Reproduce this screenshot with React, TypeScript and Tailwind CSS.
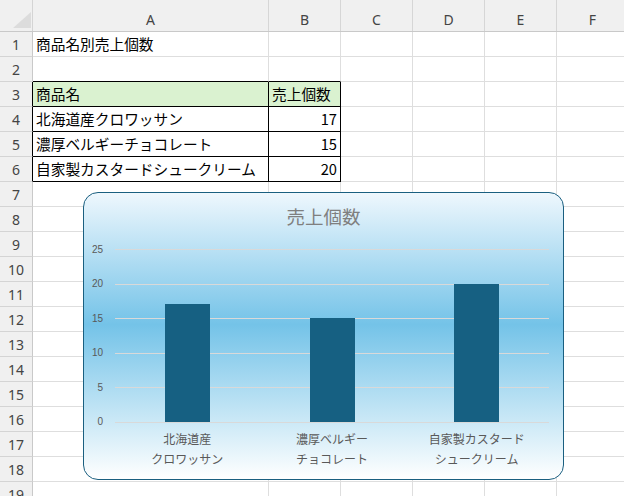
import React from 'react';

type Cell = { text?: string; right?: boolean; head?: boolean };

const COLS = [
  { label: 'A', w: 'w-[236px]' },
  { label: 'B', w: 'w-[72px]' },
  { label: 'C', w: 'w-[72px]' },
  { label: 'D', w: 'w-[72px]' },
  { label: 'E', w: 'w-[72px]' },
  { label: 'F', w: 'w-[72px]' },
];

const CELLS: Record<number, Cell[]> = {
  1: [{ text: '商品名別売上個数' }],
  3: [{ text: '商品名', head: true }, { text: '売上個数', head: true }],
  4: [{ text: '北海道産クロワッサン' }, { text: '17', right: true }],
  5: [{ text: '濃厚ベルギーチョコレート' }, { text: '15', right: true }],
  6: [{ text: '自家製カスタードシュークリーム' }, { text: '20', right: true }],
};

const SALES = [
  { top: '北海道産', bottom: 'クロワッサン', value: 17 },
  { top: '濃厚ベルギー', bottom: 'チョコレート', value: 15 },
  { top: '自家製カスタード', bottom: 'シュークリーム', value: 20 },
];

const TICKS = ['25', '20', '15', '10', '5', '0'];
const MAX = 25;

function SheetRow({ row }: { row: number }) {
  const inTable = row >= 3 && row <= 6;
  return (
    <div className="flex h-[25px]">
      <div
        className={`flex w-[33px] shrink-0 items-center justify-center border-b border-r border-b-[#d4d4d4] bg-[#f0f0f0] pt-[1px] font-['Noto_Sans',sans-serif] text-[14px] text-[#444] ${
          inTable ? 'border-r-black' : 'border-r-[#c9c9c9]'
        }`}
      >
        {row}
      </div>
      {COLS.map((col, c) => {
        const cell = CELLS[row]?.[c];
        const black = c <= 1;
        const blackRight = black && inTable;
        const blackBottom = black && row >= 2 && row <= 6;
        return (
          <div
            key={col.label}
            className={`flex ${col.w} shrink-0 items-center border-b border-r px-[3px] font-['Noto_Sans_CJK_JP',sans-serif] text-[14.7px] whitespace-nowrap text-black ${
              blackRight ? 'border-r-black' : 'border-r-[#dedede]'
            } ${blackBottom ? 'border-b-black' : 'border-b-[#dedede]'} ${
              cell?.head ? 'bg-[#daf2d0]' : 'bg-white'
            } ${cell?.right ? 'justify-end' : 'justify-start'}`}
          >
            {cell?.text}
          </div>
        );
      })}
    </div>
  );
}

function SalesChart() {
  return (
    <div className="absolute left-[83px] top-[192px] h-[288px] w-[481px] rounded-[15px] border border-[#1a5f80] bg-[linear-gradient(to_bottom,#eef7fd_0%,#74c3e8_46%,#ffffff_100%)] font-['Noto_Sans_CJK_JP',sans-serif]">
      <div className="pt-[11px] text-center text-[18.5px] leading-[24px] text-[#7f7f7f]">売上個数</div>
      <div className="mt-[21px] flex items-start">
        <div className="-mt-[5.5px] flex h-[185px] w-[19px] flex-col justify-between text-right font-['Liberation_Sans',sans-serif] text-[10px] leading-[12px] text-[#595959]">
          {TICKS.map((t) => (
            <span key={t}>{t}</span>
          ))}
        </div>
        <div className="ml-[12px] w-[434px]">
          <div className="relative flex h-[174px] flex-col border-b border-[#d9d9d9]">
            {TICKS.slice(0, 5).map((t) => (
              <div key={t} className="flex-1 border-t border-[#d9d9d9]" />
            ))}
            <div className="absolute inset-0 flex">
              {SALES.map((s) => (
                <div key={s.top} className="flex flex-1 items-end justify-center">
                  <div className="w-[45px] bg-[#166082]" style={{ height: `${(s.value / MAX) * 100}%` }} />
                </div>
              ))}
            </div>
          </div>
          <div className="mt-[6px] flex text-[12px] leading-[20px] text-[#595959]">
            {SALES.map((s) => (
              <div key={s.top} className="flex flex-1 flex-col items-center">
                <span>{s.top}</span>
                <span>{s.bottom}</span>
              </div>
            ))}
          </div>
        </div>
      </div>
    </div>
  );
}

export default function App() {
  return (
    <div className="relative h-[496px] w-[624px] overflow-hidden bg-white">
      <div className="flex h-[32px] border-b border-[#c9c9c9] bg-[#f0f0f0]">
        <div className="flex w-[33px] shrink-0 items-end justify-end border-r border-[#d4d4d4] pb-[3px] pr-[1px]">
          <svg width="18" height="16" viewBox="0 0 18 16">
            <polygon points="18,0 18,16 0,16" fill="#dcdcdc" />
          </svg>
        </div>
        {COLS.map((col) => (
          <div
            key={col.label}
            className={`flex ${col.w} shrink-0 items-center justify-center border-r border-[#d6d6d6] pt-[8px] font-['Noto_Sans',sans-serif] text-[14px] text-[#444]`}
          >
            {col.label}
          </div>
        ))}
      </div>
      {Array.from({ length: 19 }, (_, i) => (
        <SheetRow key={i + 1} row={i + 1} />
      ))}
      <SalesChart />
    </div>
  );
}
